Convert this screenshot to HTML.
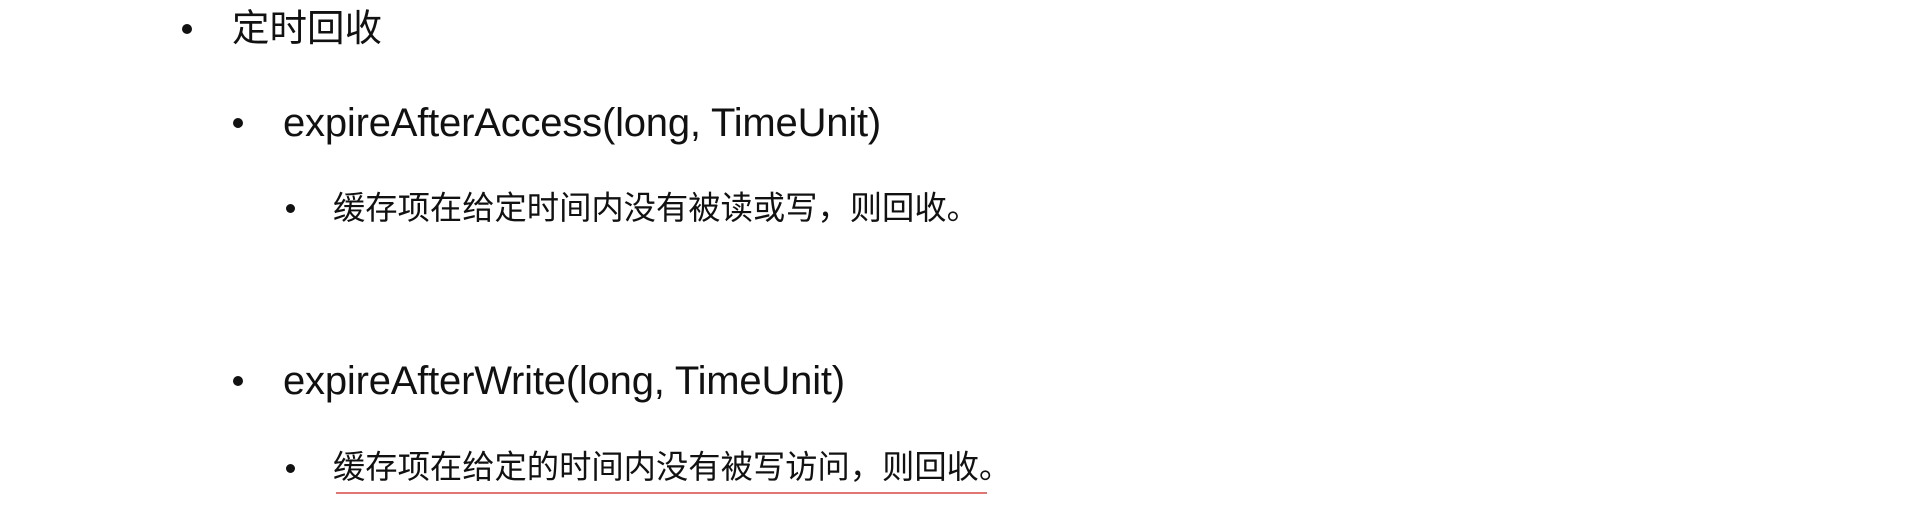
<!DOCTYPE html>
<html><head><meta charset="utf-8"><style>
html,body{margin:0;padding:0;background:#fff;width:1915px;height:507px;overflow:hidden}
.t{position:absolute;white-space:nowrap;color:#111;font-family:"Liberation Sans","Noto Sans CJK SC",sans-serif;line-height:1}
.d{position:absolute;width:10px;height:10px;border-radius:50%;background:#111}
</style></head><body>
<div class="d" style="left:182px;top:24px"></div>
<div class="t" style="left:232px;top:10px;font-size:37.5px">定时回收</div>
<div class="d" style="left:233px;top:118px"></div>
<div class="t" style="left:283px;top:103px;font-size:40px;letter-spacing:-0.2px">expireAfterAccess(long, TimeUnit)</div>
<div class="d" style="left:286px;top:204px;width:9px;height:9px"></div>
<div class="t" style="left:333px;top:192px;font-size:32.3px">缓存项在给定时间内没有被读或写，则回收。</div>
<div class="d" style="left:233px;top:376px"></div>
<div class="t" style="left:283px;top:361px;font-size:40px;letter-spacing:-0.2px">expireAfterWrite(long, TimeUnit)</div>
<div class="d" style="left:286px;top:464px;width:9px;height:9px"></div>
<div class="t" style="left:333px;top:451px;font-size:32.3px">缓存项在给定的时间内没有被写访问，则回收。</div>
<div style="position:absolute;left:336px;top:492px;width:651px;height:2px;background:#d9534f;opacity:.8"></div>
</body></html>
